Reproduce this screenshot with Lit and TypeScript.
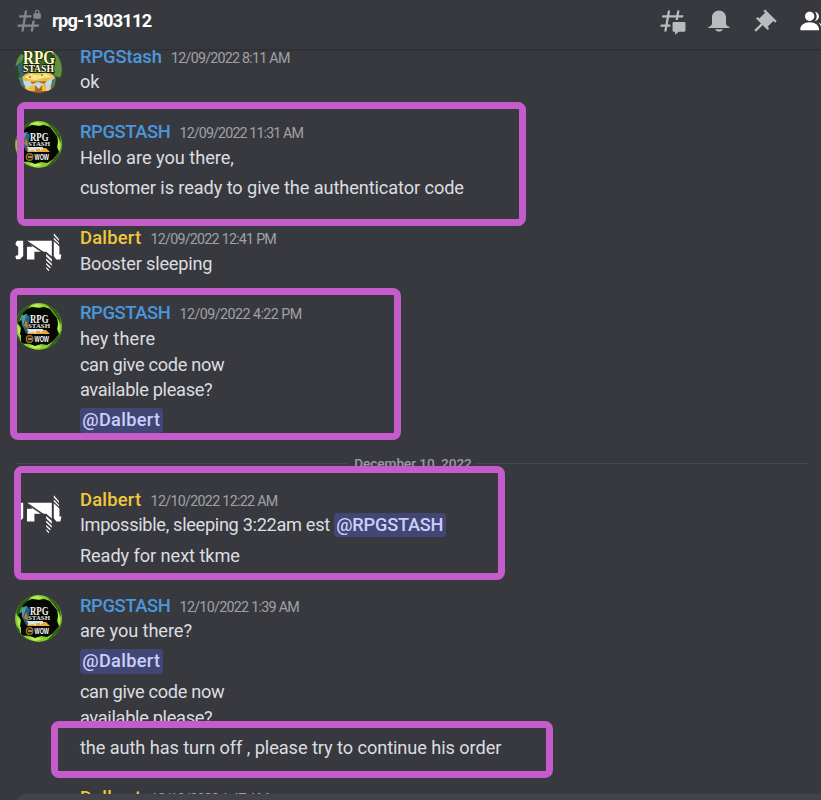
import { LitElement, html, svg, css } from "lit";
import { customElement, property } from "lit/decorators.js";

type Piece = { text: string; width: number; mention?: boolean };
type Block = Piece[][];
type Message = {
  author: string;
  authorWidth: number;
  tone: "blue" | "gold";
  avatar: "chest" | "wow" | "glyph";
  time: string;
  timeWidth: number;
  blocks: Block[];
};

const t = (text: string, width: number): Piece => ({ text, width });
const at = (text: string, width: number): Piece => ({ text, width, mention: true });

const DAY_ONE: Message[] = [
  {
    author: "RPGStash", authorWidth: 82, tone: "blue", avatar: "chest",
    time: "12/09/2022 8:11 AM", timeWidth: 118.5,
    blocks: [[[t("ok", 19.5)]]],
  },
  {
    author: "RPGSTASH", authorWidth: 90.5, tone: "blue", avatar: "wow",
    time: "12/09/2022 11:31 AM", timeWidth: 123.5,
    blocks: [
      [[t("Hello are you there,", 154)]],
      [[t("customer is ready to give the authenticator code", 384)]],
    ],
  },
  {
    author: "Dalbert", authorWidth: 61.5, tone: "gold", avatar: "glyph",
    time: "12/09/2022 12:41 PM", timeWidth: 125.5,
    blocks: [[[t("Booster sleeping", 132.5)]]],
  },
  {
    author: "RPGSTASH", authorWidth: 90.5, tone: "blue", avatar: "wow",
    time: "12/09/2022 4:22 PM", timeWidth: 122,
    blocks: [
      [[t("hey there", 75.5)], [t("can give code now", 144.5)], [t("available please?", 132.5)]],
      [[at("@Dalbert", 78)]],
    ],
  },
];

const DAY_TWO: Message[] = [
  {
    author: "Dalbert", authorWidth: 61.5, tone: "gold", avatar: "glyph",
    time: "12/10/2022 12:22 AM", timeWidth: 127,
    blocks: [
      [[t("Impossible, sleeping 3:22am est", 250), at("@RPGSTASH", 107)]],
      [[t("Ready for next tkme", 160)]],
    ],
  },
  {
    author: "RPGSTASH", authorWidth: 90.5, tone: "blue", avatar: "wow",
    time: "12/10/2022 1:39 AM", timeWidth: 119.5,
    blocks: [
      [[t("are you there?", 112)]],
      [[at("@Dalbert", 78)]],
      [[t("can give code now", 144.5)], [t("available please?", 132.5)]],
      [[t("the auth has turn off , please try to continue his order", 421.5)]],
    ],
  },
  {
    author: "Dalbert", authorWidth: 61.5, tone: "gold", avatar: "glyph",
    time: "12/10/2022 1:47 AM", timeWidth: 118,
    blocks: [[[t("ok", 19.5)]]],
  },
];

/** A run of text whose tracking is adjusted to fill a given measure. */
@customElement("fit-text")
export class FitText extends LitElement {
  @property({ type: Number }) measure = 0;
  @property() text = "";
  static styles = css`
    :host { display: inline-block; white-space: pre; }
  `;
  updated() {
    this.style.letterSpacing = "0px";
    const gaps = Math.max(1, this.text.length);
    const natural = this.getBoundingClientRect().width;
    this.style.letterSpacing = `${(this.measure - natural) / gaps}px`;
  }
  render() {
    return html`${this.text}`;
  }
}

@customElement("user-avatar")
export class UserAvatar extends LitElement {
  @property() kind: Message["avatar"] = "wow";
  static styles = css`
    :host { display: block; width: 47px; height: 47px; flex: none; }
    svg { display: block; width: 47px; height: 47px; }
    text { font-family: "Liberation Serif", serif; font-weight: 700; }
    .sans { font-family: "Liberation Sans", sans-serif; }
  `;
  private chest() {
    return svg`
      <defs>
        <clipPath id="c"><circle cx="23.5" cy="23.5" r="23.4"/></clipPath>
        <radialGradient id="g"><stop offset="0" stop-color="#4d7a30"/><stop offset="1" stop-color="#24481b"/></radialGradient>
      </defs>
      <g clip-path="url(#c)">
        <rect width="47" height="47" fill="url(#g)"/>
        <path d="M38 6l3 8-3 10 2 6 7 2V4zM4 6l5 4-3 8-6 2z" fill="#5f9040"/>
        <path d="M2 19l5-4 4 9 25 1 4 8-34 2z" fill="#35606f"/>
        <path d="M7 31c4-4 9-5 15-6 7 0 14 1 18 6l-2 6H9z" fill="#e9bd45"/>
        <path d="M9 31l7-3 7 1 6-2 9 4-9 1-8 2-7-1z" fill="#fbe58a"/>
        <circle cx="15" cy="31" r="1" fill="#c4532d"/><circle cx="27" cy="29" r="1" fill="#46903c"/>
        <path d="M4 32l7 4 26-1 4-3-3 15H9z" fill="#a86a24"/>
        <path d="M10 38h10v7H10zM27 38h9v7h-9z" fill="#f0b942"/>
        <path d="M4 31l6 4h5l2 3 6-2 6 2 3-3 8-4-1 7-4 1-1 6-3-1V38l-4 1-3 4-4-4-5 1-2 4-3-5-4-2z" fill="#c4dbe1"/>
        <path d="M4 30l4 4 2 11-4-4zM37 34l3-2-1 8-3 4z" fill="#47768a"/>
        <text x="8" y="18" font-size="18.6" textLength="32" lengthAdjust="spacingAndGlyphs" fill="#fff9cf" stroke="#1c2b0c" stroke-width="1.6" paint-order="stroke">RPG</text>
        <text x="8" y="26" font-size="10.6" textLength="31" lengthAdjust="spacingAndGlyphs" fill="#fffbe0" stroke="#141f0a" stroke-width="1.8" paint-order="stroke">STASH</text>
      </g>`;
  }
  private wow() {
    return svg`
      <defs><clipPath id="c"><circle cx="23.5" cy="23.5" r="23.4"/></clipPath></defs>
      <g clip-path="url(#c)">
        <rect width="47" height="47" fill="#83cf2b"/>
        <path d="M0 14l6-7 7-5 6-2-7 6-6 8-3 9zM30 0l9 5 6 9 1 8-4-8-5-7zM0 29l4 5 2 6 5 5-8-4zM46 28l-2 8-7 7-6 3 6-6 5-6z" fill="#2c5c10"/>
        <path d="M14 3l8-2 7 2-7 1zM2 20l1 9 3 6-1-9zM43 17l2 7-1 9-1-8zM14 43l6-2 7 3-7 2z" fill="#b9ef57"/>
        <path d="M12 6l5-2 7 1 5-1 6 2 3 4 4 5 1 6-1 5 2 5-4 5-3 3-5 3-6-1-6 2-5-2-6-3-4-7 1-6-3-5 4-4 1-6z" fill="#050705"/>
        <path d="M6 13l6-2 3 3-2 13 17 1 3 2H11l-4-8z" fill="#2c6177"/>
        <path d="M6 13l6-2-3 8-1 5z" fill="#4e9ab3"/>
        <path d="M11 17l3 9-5-3z" fill="#c47b2a"/>
        <path d="M14 27l17 0 4 4H12z" fill="#e8a935"/>
        <path d="M12 26h16v2l-3 2v-2h-4v3l-3-2-4 1z" fill="#d5e6ea"/>
        <text x="15" y="20" font-size="12.4" textLength="18.5" lengthAdjust="spacingAndGlyphs" fill="#f2f2ee" stroke="#050705" stroke-width="1" paint-order="stroke">RPG</text>
        <text x="13" y="25.2" font-size="6.8" textLength="22" lengthAdjust="spacingAndGlyphs" fill="#e3e3df" stroke="#050705" stroke-width="1" paint-order="stroke">STASH</text>
        <rect x="6" y="31.2" width="30" height="9.6" rx="3" fill="#070706"/>
        <circle cx="14.6" cy="36" r="3.3" fill="#2b2218" stroke="#a2742a" stroke-width="1.2"/>
        <path d="M13 35l1 2 1-2 1 2 1-2" fill="none" stroke="#f1be57" stroke-width=".8"/>
        <text class="sans" x="19.5" y="39" font-size="8.4" textLength="14.5" lengthAdjust="spacingAndGlyphs" fill="#fff">WOW</text>
      </g>`;
  }
  private glyph() {
    return svg`
      <g fill="#fff">
        <path d="M0.5 16.3L2 13.8h6.2V29L4.8 32.3H1.2L0.3 29l2.9-1V20L.8 18z"/>
        <path d="M12 13.8h24.8V29.5L31.2 24.8H19.4V32.4H12V19.8h5.5z"/>
        <path d="M31.2 27l5.6 5v2.8l-5.6-5.2zM31.2 31.6l5.6 5.2v2l-5.6-5.2zM31.2 36l4.4 4-.4 1.6-4-3.8zM31.2 40l3 3-.6 1.2-2.4-2.6z"/>
        <path d="M38.8 6.2l5.2 6v1.8l-5.2-5.6zM38.8 10.4L44 16v1.6L38.8 12.4z"/>
        <path d="M38.8 14.2L44.4 19.6V27.5h2l-1 4.9h-4l-2.6-3.2z"/>
      </g>
      <path d="M11.5 14.2l16.5 11.2" stroke="#38393e" stroke-width="1.6"/>`;
  }
  render() {
    const art = this.kind === "chest" ? this.chest() : this.kind === "wow" ? this.wow() : this.glyph();
    return html`<svg viewBox="0 0 47 47">${art}</svg>`;
  }
}

@customElement("app-root")
export class AppRoot extends LitElement {
  static styles = css`
    :host {
      display: block;
      font-family: Roboto, "Noto Sans", sans-serif;
      color: #dcdde0;
    }
    .window {
      position: relative;
      display: flex;
      flex-direction: column;
      width: 821px;
      height: 800px;
      overflow: hidden;
      background: #38393e;
    }
    header {
      display: flex;
      align-items: center;
      flex: none;
      box-sizing: border-box;
      height: 50px;
      padding: 0 0 8px 15px;
      border-bottom: 1px solid #2e2f33;
      box-shadow: 0 1px 0 #34353a;
      color: #b9bbbf;
    }
    .icon { display: block; width: 28px; height: 28px; flex: none; fill: currentColor; }
    .channel { color: #85868c; }
    h1 {
      margin: 0 auto 0 9px;
      font-size: 18.2px;
      line-height: 24px;
      font-weight: 700;
      color: #fff;
    }
    nav { display: flex; flex: none; gap: 18.8px; width: 163.2px; overflow: hidden; }
    .active { color: #fff; }
    .feed { flex: 1; min-height: 0; overflow: hidden; }
    .scroller { display: flex; flex-direction: column; margin-top: -6.5px; }
    .group { display: flex; flex-direction: column; gap: 24.2px; }
    article { display: flex; gap: 17.9px; padding-left: 15px; }
    user-avatar { margin-top: 2.5px; }
    .body { display: flex; flex-direction: column; gap: 4.8px; }
    .head { display: flex; align-items: baseline; gap: 9.2px; height: 25.65px; line-height: 25.65px; margin-bottom: -4.8px; }
    .name { font-size: 18.4px; font-weight: 500; }
    .blue { color: #4a97dd; }
    .gold { color: #efc83d; }
    .time { font-size: 14.3px; color: #a0a1a6; }
    .line { display: flex; align-items: center; gap: 4px; height: 25.65px; line-height: 25.65px; font-size: 18.2px; }
    .mention {
      display: block;
      height: 24.4px;
      line-height: 24.6px;
      padding: 0 2.4px;
      border-radius: 3.5px;
      background: #424674;
      color: #cbcffb;
      font-weight: 500;
    }
    .divider {
      display: flex;
      align-items: center;
      gap: 5px;
      height: 20px;
      margin: 20.6px 13px 12.8px 15px;
      font-size: 13.6px;
      line-height: 18px;
      font-weight: 500;
      color: #9b9ca2;
    }
    .divider::before, .divider::after { content: ""; height: 1px; flex: 1; background: #45474d; }
    .divider fit-text { margin: 0 -1.5px 1px 1.5px; }
    .composer {
      position: absolute;
      left: 16px;
      right: -16px;
      top: 794px;
      height: 40px;
      border-radius: 9px;
      background: #414349;
    }
    .mark { position: absolute; box-sizing: border-box; border: 7px solid #c45ccb; border-radius: 8px; }
    .m1 { left: 17px; top: 101.5px; width: 508.5px; height: 124px; }
    .m2 { left: 10px; top: 288.3px; width: 390.5px; height: 152.2px; }
    .m3 { left: 14.3px; top: 466.3px; width: 490.9px; height: 114px; }
    .m4 { left: 51.3px; top: 721px; width: 501.9px; height: 56.5px; }
  `;

  private piece(p: Piece) {
    const run = html`<fit-text .text=${p.text} .measure=${p.width}></fit-text>`;
    return p.mention ? html`<span class="mention">${run}</span>` : run;
  }

  private message(m: Message) {
    return html`<article>
      <user-avatar .kind=${m.avatar}></user-avatar>
      <div class="body">
        <div class="head">
          <fit-text class="name ${m.tone}" .text=${m.author} .measure=${m.authorWidth}></fit-text>
          <fit-text class="time" .text=${m.time} .measure=${m.timeWidth}></fit-text>
        </div>
        ${m.blocks.map(b => html`<div>${b.map(l => html`<div class="line">${l.map(p => this.piece(p))}</div>`)}</div>`)}
      </div>
    </article>`;
  }

  render() {
    return html`<div class="window">
      <header>
        <svg class="icon channel" viewBox="0 0 24 24">
          <path d="M5.4 21L6.1 17H2L2.4 15H6.4L7.45 9H3.4L3.8 7H7.8L8.5 3H10.5L9.8 7H14V9H9.45L8.4 15H14.4L15.1 11.5H17.1L16.4 15H20.6L20.2 17H16.1L15.4 21H13.4L14.1 17H8.1L7.4 21Z"/>
          <path fill-rule="evenodd" d="M16.9 5.4V4.4a2.1 2.1 0 0 1 4.2 0V5.4h.3a.8.8 0 0 1 .8.8V9.3a.8.8 0 0 1-.8.8H16.6a.8.8 0 0 1-.8-.8V6.2a.8.8 0 0 1 .8-.8zm1.1 0h2V4.5a1 1 0 0 0-2 0z"/>
        </svg>
        <h1><fit-text .text=${"rpg-1303112"} .measure=${99.5}></fit-text></h1>
        <nav>
          <svg class="icon" viewBox="0 0 24 24">
            <path d="M5.3 21L6 17H2L2.35 15H6.35L7.41 9H3.4L3.76 7H7.76L8.47 3H10.47L9.76 7H15.76L16.47 3H18.47L17.76 7H21.76L21.41 9H17.41L17.05 11.04H15.05L15.41 9H9.41L8.35 15H10.56V17H8L7.29 21Z"/>
            <path d="M13.44 12.96c-.53 0-.96.43-.96.96v6.3c0 .53.43.96.96.96h.96c.13 0 .24.11.24.24v2.04c0 .21.25.32.4.18l2.45-2.21c.17-.16.4-.25.64-.25h4.43c.53 0 .96-.43.96-.96v-6.3c0-.53-.43-.96-.96-.96z"/>
          </svg>
          <svg class="icon" viewBox="0 0 24 24">
            <path d="M18 9V14C18 15.657 19.344 17 21 17V18H3V17C4.656 17 6 15.657 6 14V9C6 5.686 8.686 3 12 3C15.314 3 18 5.686 18 9ZM12 21C10.524 21 9.248 20.19 8.555 19H15.445C14.752 20.19 13.476 21 12 21Z"/>
          </svg>
          <svg class="icon" viewBox="0 0 24 24">
            <path d="M22 12L12.101 2.101L10.686 3.514L12.101 4.929L7.151 9.879L5.736 8.465L4.322 9.88L8.565 14.122L2.908 19.778L4.322 21.192L9.979 15.536L14.222 19.778L15.636 18.364L14.222 16.95L19.171 12L20.586 13.414L22 12Z"/>
          </svg>
          <svg class="icon active" viewBox="0 0 24 24">
            <path d="M14 8.006C14 10.211 12.206 12.006 10 12.006C7.795 12.006 6 10.211 6 8.006C6 5.801 7.794 4.006 10 4.006C12.206 4.006 14 5.801 14 8.006ZM2 19.006C2 15.473 5.29 13.006 10 13.006C14.711 13.006 18 15.473 18 19.006V20.006H2V19.006Z"/>
            <path d="M20 20.006H22V19.006C22 16.443 20.27 14.441 17.521 13.535C19.062 14.913 20 16.806 20 19.006ZM14.883 11.908C16.666 11.504 18 9.908 18 8.006C18 5.969 16.469 4.282 14.497 4.037C15.432 5.095 16 6.485 16 8.006C16 9.449 15.489 10.774 14.638 11.81Z"/>
          </svg>
        </nav>
      </header>
      <div class="feed">
        <div class="scroller">
          <div class="group">${DAY_ONE.map(m => this.message(m))}</div>
          <div class="divider"><fit-text .text=${"December 10, 2022"} .measure=${117.5}></fit-text></div>
          <div class="group">${DAY_TWO.map(m => this.message(m))}</div>
        </div>
      </div>
      <div class="composer"></div>
      <div class="mark m1"></div>
      <div class="mark m2"></div>
      <div class="mark m3"></div>
      <div class="mark m4"></div>
    </div>`;
  }
}
